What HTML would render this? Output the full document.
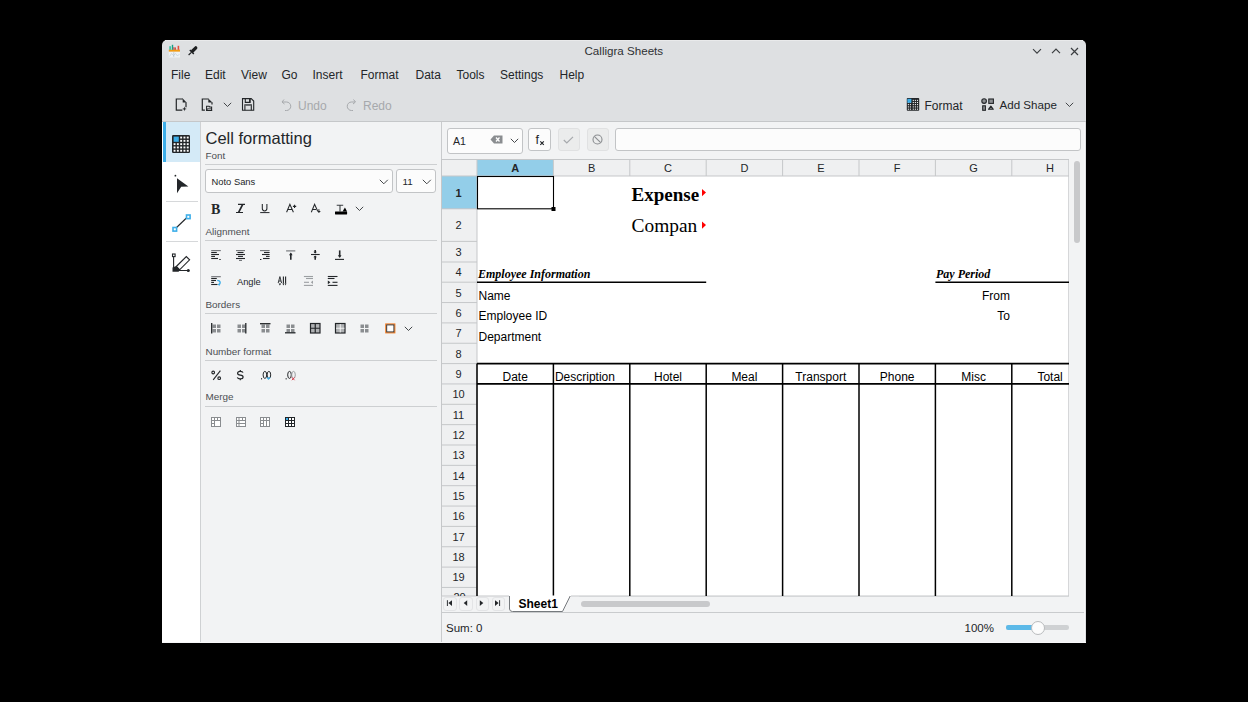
<!DOCTYPE html>
<html><head><meta charset="utf-8">
<style>
*{margin:0;padding:0;box-sizing:border-box}
html,body{width:1248px;height:702px;background:#000;overflow:hidden;font-family:"Liberation Sans",sans-serif;color:#232629}
.a{position:absolute}
.t{position:absolute;white-space:nowrap;line-height:1}
svg{position:absolute;overflow:visible}
</style></head>
<body>

<div class="a" style="left:162px;top:40px;width:924px;height:603px;background:#dee0e2;border-radius:5px 5px 0 0;"></div>
<div class="a" style="left:165px;top:40px;width:918px;height:1px;background:#e9eaeb;"></div>
<svg style="left:0px;top:0px;" width="1" height="1" viewBox="0 0 1 1">
<rect x="168.8" y="51.5" width="11.2" height="6" fill="#eef2f5"/>
<path d="M169.5 56.5 L171.5 53.5 L173.5 55.5 L175.5 53.5 L177.5 56 L179.5 54" stroke="#b8c8d4" stroke-width="0.6" fill="none"/>
<path d="M173.8 52 V57" stroke="#9fb0bd" stroke-width="0.5"/>
<rect x="168.8" y="49.6" width="11.2" height="2" fill="#f39c12"/>
<rect x="169.4" y="46.2" width="1.4" height="3.6" fill="#1abc9c"/>
<rect x="171.8" y="44.8" width="1.4" height="5" fill="#16a085"/>
<rect x="174.4" y="47.4" width="1.4" height="2.4" fill="#c0392b"/>
<rect x="177.6" y="45.8" width="1.6" height="4" fill="#e74c3c"/>
<rect x="173.2" y="47.2" width="1" height="2.6" fill="#d35454"/>
</svg>
<svg style="left:0px;top:0px;" width="1" height="1" viewBox="0 0 1 1">
<path d="M195.8 47.8 L192.6 51" stroke="#1d1f21" stroke-width="3.2" stroke-linecap="round"/>
<path d="M189.8 49.9 L193.8 53.9" stroke="#1d1f21" stroke-width="1.4"/>
<path d="M191.4 52.4 L188.6 55" stroke="#1d1f21" stroke-width="1.1"/>
</svg>
<div class="t" style="left:584.5px;top:44.8px;font-size:11.6px;color:#2e3134;">Calligra Sheets</div>
<svg style="left:1032px;top:48px;" width="10" height="7" viewBox="0 0 10 7"><path d="M1 1.2 L5 5.2 L9 1.2" stroke="#3b3e41" stroke-width="1.1" fill="none"/></svg>
<svg style="left:1051px;top:48px;" width="10" height="7" viewBox="0 0 10 7"><path d="M1 5.2 L5 1.2 L9 5.2" stroke="#3b3e41" stroke-width="1.2" fill="none"/></svg>
<svg style="left:1069.6px;top:47px;" width="9" height="9" viewBox="0 0 9 9"><path d="M1 1 L8 8 M8 1 L1 8" stroke="#3b3e41" stroke-width="1.2" fill="none"/></svg>
<div class="t" style="left:171px;top:69.2px;font-size:12px;color:#232629;">File</div>
<div class="t" style="left:205px;top:69.2px;font-size:12px;color:#232629;">Edit</div>
<div class="t" style="left:241px;top:69.2px;font-size:12px;color:#232629;">View</div>
<div class="t" style="left:281.5px;top:69.2px;font-size:12px;color:#232629;">Go</div>
<div class="t" style="left:312.5px;top:69.2px;font-size:12px;color:#232629;">Insert</div>
<div class="t" style="left:360.5px;top:69.2px;font-size:12px;color:#232629;">Format</div>
<div class="t" style="left:415.5px;top:69.2px;font-size:12px;color:#232629;">Data</div>
<div class="t" style="left:456.5px;top:69.2px;font-size:12px;color:#232629;">Tools</div>
<div class="t" style="left:500px;top:69.2px;font-size:12px;color:#232629;">Settings</div>
<div class="t" style="left:559.5px;top:69.2px;font-size:12px;color:#232629;">Help</div>
<svg style="left:175px;top:97px;" width="14" height="16" viewBox="0 0 14 16">
<path d="M8 2 H1.3 V13.1 H7.3" stroke="#232629" stroke-width="1.2" fill="none"/>
<path d="M11 5.2 V10.2" stroke="#232629" stroke-width="1.2" fill="none"/>
<path d="M7.7 1.4 V5.5 H11.6 Z" fill="#232629"/>
<path d="M9.4 9.6 L9.95 11.35 L11.7 11.9 L9.95 12.45 L9.4 14.2 L8.85 12.45 L7.1 11.9 L8.85 11.35 Z" fill="#232629"/>
</svg>
<svg style="left:201px;top:97px;" width="14" height="16" viewBox="0 0 14 16">
<path d="M7.6 2 H1.3 V13.1 H3.9" stroke="#232629" stroke-width="1.2" fill="none"/>
<path d="M11 5.2 V7.6" stroke="#232629" stroke-width="1.2" fill="none"/>
<path d="M7.3 1.4 V5.5 H11.4 Z" fill="#232629"/>
<path d="M5.6 13.4 V9.3 H8 L8.8 10 H10.6 V13.4 Z" fill="#f4f4f5" stroke="#232629" stroke-width="1.1"/>
<path d="M5.6 13.4 L6.8 11.3 H10.6" stroke="#232629" stroke-width="0.8" fill="none"/>
<path d="M5.1 13.4 H11.1" stroke="#232629" stroke-width="1.1"/>
</svg>
<svg style="left:223px;top:102px;" width="9" height="6" viewBox="0 0 9 6"><path d="M0.8 0.8 L4.5 4.5 L8.2 0.8" stroke="#3b3e41" stroke-width="0.95" fill="none"/></svg>
<svg style="left:241px;top:97px;" width="14" height="16" viewBox="0 0 14 16">
<path d="M1.5 1.6 H10.2 L12.7 4.1 V13.2 H1.5 Z" stroke="#232629" stroke-width="1.1" fill="none"/>
<path d="M4.3 1.6 V5.4 H8.8 V1.6" stroke="#232629" stroke-width="1.1" fill="none"/>
<rect x="8.2" y="1.6" width="1.4" height="4.3" fill="#232629"/>
<path d="M3.9 13.2 V7.9 H10.3 V13.2" stroke="#232629" stroke-width="1.1" fill="none"/>
<path d="M4 8.2 H10.2" stroke="#6b6e71" stroke-width="1.4"/>
</svg>
<svg style="left:281px;top:98px;" width="12" height="14" viewBox="0 0 12 14"><path d="M3 1.5 L1 4 L3.5 6 M1.5 4 H5.5 A4.2 4.2 0 0 1 5.5 12.5 H4" stroke="#a6a9ac" stroke-width="1" fill="none"/></svg>
<div class="t" style="left:298px;top:99.5px;font-size:12px;color:#a6a9ac;">Undo</div>
<svg style="left:345px;top:98px;" width="12" height="14" viewBox="0 0 12 14"><path d="M8.5 1.5 L10.5 4 L8 6 M10 4 H6.5 A4.2 4.2 0 0 0 6.5 12.5 H8" stroke="#a6a9ac" stroke-width="1" fill="none"/></svg>
<div class="t" style="left:363px;top:99.5px;font-size:12px;color:#a6a9ac;">Redo</div>
<svg style="left:0px;top:0px;" width="1" height="1" viewBox="0 0 1 1"><rect x="906.8" y="98" width="12.4" height="12.8" rx="0.8" fill="#232629"/><rect x="907.85" y="99.85000000000001" width="1.1" height="1.1" fill="#f4f4f4"/><rect x="907.85" y="101.95" width="1.1" height="1.1" fill="#f4f4f4"/><rect x="907.85" y="104.05" width="1.1" height="1.1" fill="#f4f4f4"/><rect x="907.85" y="106.35000000000001" width="1.1" height="1.1" fill="#f4f4f4"/><rect x="907.85" y="108.65" width="1.1" height="1.1" fill="#f4f4f4"/><rect x="909.85" y="99.85000000000001" width="1.1" height="1.1" fill="#f4f4f4"/><rect x="909.85" y="101.95" width="1.1" height="1.1" fill="#f4f4f4"/><rect x="909.85" y="104.05" width="1.1" height="1.1" fill="#f4f4f4"/><rect x="909.85" y="106.35000000000001" width="1.1" height="1.1" fill="#f4f4f4"/><rect x="909.85" y="108.65" width="1.1" height="1.1" fill="#f4f4f4"/><rect x="912.75" y="99.85000000000001" width="1.1" height="1.1" fill="#f4f4f4"/><rect x="912.75" y="101.95" width="1.1" height="1.1" fill="#f4f4f4"/><rect x="912.75" y="104.05" width="1.1" height="1.1" fill="#f4f4f4"/><rect x="912.75" y="106.35000000000001" width="1.1" height="1.1" fill="#f4f4f4"/><rect x="912.75" y="108.65" width="1.1" height="1.1" fill="#f4f4f4"/><rect x="914.85" y="99.85000000000001" width="1.1" height="1.1" fill="#f4f4f4"/><rect x="914.85" y="101.95" width="1.1" height="1.1" fill="#f4f4f4"/><rect x="914.85" y="104.05" width="1.1" height="1.1" fill="#f4f4f4"/><rect x="914.85" y="106.35000000000001" width="1.1" height="1.1" fill="#f4f4f4"/><rect x="914.85" y="108.65" width="1.1" height="1.1" fill="#f4f4f4"/><rect x="916.95" y="99.85000000000001" width="1.1" height="1.1" fill="#f4f4f4"/><rect x="916.95" y="101.95" width="1.1" height="1.1" fill="#f4f4f4"/><rect x="916.95" y="104.05" width="1.1" height="1.1" fill="#f4f4f4"/><rect x="916.95" y="106.35000000000001" width="1.1" height="1.1" fill="#f4f4f4"/><rect x="916.95" y="108.65" width="1.1" height="1.1" fill="#f4f4f4"/><rect x="907.4" y="98.8" width="4" height="4" fill="#3daee9"/></svg>
<div class="t" style="left:924.5px;top:99.5px;font-size:12px;color:#232629;">Format</div>
<svg style="left:0px;top:0px;" width="1" height="1" viewBox="0 0 1 1">
<circle cx="984.1" cy="101.1" r="2.3" fill="#8d9093" stroke="#232629" stroke-width="1.1"/>
<rect x="988.8" y="99" width="4.6" height="4.4" fill="#8d9093" stroke="#232629" stroke-width="1.1"/>
<rect x="982.7" y="105.8" width="2.7" height="4.5" fill="#8d9093" stroke="#232629" stroke-width="1.1"/>
<path d="M988.5 109.3 L990.9 106.1 L993.3 109.3 Z" fill="#8d9093" stroke="#232629" stroke-width="1.1" stroke-linejoin="round"/>
</svg>
<div class="t" style="left:999.5px;top:99.2px;font-size:11.6px;color:#232629;">Add Shape</div>
<svg style="left:1065px;top:102px;" width="9" height="6" viewBox="0 0 9 6"><path d="M0.8 0.8 L4.5 4.5 L8.2 0.8" stroke="#3b3e41" stroke-width="0.95" fill="none"/></svg>
<div class="a" style="left:162px;top:121px;width:924px;height:1px;background:#c5c7c9;"></div>
<div class="a" style="left:162px;top:122px;width:38px;height:521px;background:#ffffff;"></div>
<div class="a" style="left:200px;top:122px;width:1px;height:521px;background:#cfd1d3;"></div>
<div class="a" style="left:163px;top:122px;width:37px;height:40px;background:#d4eaf7;"></div>
<div class="a" style="left:163px;top:122px;width:3px;height:40px;background:#3daee9;"></div>
<div class="a" style="left:166px;top:201px;width:32px;height:1px;background:#d6d8da;"></div>
<div class="a" style="left:166px;top:241px;width:32px;height:1px;background:#d6d8da;"></div>
<svg style="left:172px;top:135px;" width="18" height="18" viewBox="0 0 18 18">
<rect x="0" y="0" width="18" height="18" rx="1.2" fill="#232629"/>
<rect x="1.6" y="8.2" width="1.9" height="1.9" fill="#fcfcfc"/><rect x="1.6" y="11.499999999999998" width="1.9" height="1.9" fill="#fcfcfc"/><rect x="1.6" y="14.799999999999999" width="1.9" height="1.9" fill="#fcfcfc"/><rect x="4.9" y="8.2" width="1.9" height="1.9" fill="#fcfcfc"/><rect x="4.9" y="11.499999999999998" width="1.9" height="1.9" fill="#fcfcfc"/><rect x="4.9" y="14.799999999999999" width="1.9" height="1.9" fill="#fcfcfc"/><rect x="8.2" y="1.6" width="1.9" height="1.9" fill="#fcfcfc"/><rect x="8.2" y="4.9" width="1.9" height="1.9" fill="#fcfcfc"/><rect x="8.2" y="8.2" width="1.9" height="1.9" fill="#fcfcfc"/><rect x="8.2" y="11.499999999999998" width="1.9" height="1.9" fill="#fcfcfc"/><rect x="8.2" y="14.799999999999999" width="1.9" height="1.9" fill="#fcfcfc"/><rect x="11.499999999999998" y="1.6" width="1.9" height="1.9" fill="#fcfcfc"/><rect x="11.499999999999998" y="4.9" width="1.9" height="1.9" fill="#fcfcfc"/><rect x="11.499999999999998" y="8.2" width="1.9" height="1.9" fill="#fcfcfc"/><rect x="11.499999999999998" y="11.499999999999998" width="1.9" height="1.9" fill="#fcfcfc"/><rect x="11.499999999999998" y="14.799999999999999" width="1.9" height="1.9" fill="#fcfcfc"/><rect x="14.799999999999999" y="1.6" width="1.9" height="1.9" fill="#fcfcfc"/><rect x="14.799999999999999" y="4.9" width="1.9" height="1.9" fill="#fcfcfc"/><rect x="14.799999999999999" y="8.2" width="1.9" height="1.9" fill="#fcfcfc"/><rect x="14.799999999999999" y="11.499999999999998" width="1.9" height="1.9" fill="#fcfcfc"/><rect x="14.799999999999999" y="14.799999999999999" width="1.9" height="1.9" fill="#fcfcfc"/>
<rect x="1.6" y="1.6" width="5.2" height="5.2" fill="#3daee9"/>
</svg>
<svg style="left:0px;top:0px;" width="1" height="1" viewBox="0 0 1 1">
<circle cx="175.4" cy="175.7" r="0.9" fill="#232629"/>
<path d="M177 178.3 L188.4 186.4 L181.2 186.7 L177 193.2 Z" fill="#232629"/>
</svg>
<svg style="left:0px;top:0px;" width="1" height="1" viewBox="0 0 1 1">
<path d="M175 229 L188 216.5" stroke="#232629" stroke-width="1.1"/>
<rect x="173" y="227.5" width="3.6" height="3.6" fill="#fff" stroke="#3daee9" stroke-width="1.6"/>
<rect x="186.5" y="215" width="3.6" height="3.6" fill="#fff" stroke="#3daee9" stroke-width="1.6"/>
</svg>
<svg style="left:0px;top:0px;" width="1" height="1" viewBox="0 0 1 1">
<path d="M173.6 256.5 V270.5 H187" stroke="#232629" stroke-width="1.1" fill="none"/>
<rect x="172.5" y="254" width="2.6" height="2.6" fill="#fff" stroke="#232629" stroke-width="1.1"/>
<circle cx="188.3" cy="270.6" r="1.5" fill="#232629"/>
<path d="M176.3 266.5 L186.3 256.5 L189.6 259.8 L179.6 269.8 Z" fill="#fcfcfc" stroke="#232629" stroke-width="1.1"/>
<path d="M172.5 271.8 L172.5 267.5 L176.3 266 L180.2 269.7 L178.6 271.8 Z" fill="#232629"/>
</svg>
<div class="a" style="left:201px;top:122px;width:240px;height:521px;background:#f2f3f4;"></div>
<div class="a" style="left:441px;top:122px;width:1px;height:521px;background:#c9cbcd;"></div>
<div class="t" style="left:205.5px;top:130px;font-size:16.5px;color:#232629;">Cell formatting</div>
<div class="t" style="left:205.5px;top:150.5px;font-size:9.9px;color:#4b4e52;">Font</div>
<div class="a" style="left:205px;top:164px;width:232px;height:1px;background:#cdcfd1;"></div>
<div class="a" style="left:205px;top:169px;width:188px;height:24px;background:#fcfcfc;border:1px solid #c2c4c6;border-radius:3px;"></div>
<div class="t" style="left:211.5px;top:177px;font-size:9.4px;color:#232629;">Noto Sans</div>
<svg style="left:379px;top:179px;" width="10" height="6" viewBox="0 0 10 6"><path d="M0.8 0.8 L4.8 4.8 L8.8 0.8" stroke="#3b3e41" stroke-width="0.95" fill="none"/></svg>
<div class="a" style="left:396px;top:169px;width:40px;height:24px;background:#fcfcfc;border:1px solid #c2c4c6;border-radius:3px;"></div>
<div class="t" style="left:402.5px;top:177px;font-size:9.8px;color:#232629;">11</div>
<svg style="left:422px;top:179px;" width="10" height="6" viewBox="0 0 10 6"><path d="M0.8 0.8 L4.8 4.8 L8.8 0.8" stroke="#3b3e41" stroke-width="0.95" fill="none"/></svg>
<div class="t" style="left:211px;top:202.8px;font-size:14px;font-family:'Liberation Serif',serif;font-weight:bold;color:#232629">B</div>
<svg style="left:0px;top:0px;" width="1" height="1" viewBox="0 0 1 1"><path d="M238 204.4 H245 M236 212.5 H243" stroke="#232629" stroke-width="1.1"/><path d="M242.6 204.6 L238.6 212.3" stroke="#232629" stroke-width="1.7"/></svg>
<svg style="left:0px;top:0px;" width="1" height="1" viewBox="0 0 1 1"><path d="M262.3 203.9 V208.6 A2.3 2.3 0 0 0 266.9 208.6 V203.9" stroke="#232629" stroke-width="1.05" fill="none"/><path d="M260.2 212.6 H269.5" stroke="#232629" stroke-width="1"/></svg>
<svg style="left:0px;top:0px;" width="1" height="1" viewBox="0 0 1 1"><path d="M286.6 212.3 L289.9 204.3 L293.4 212.3 M287.9 209.4 H292" stroke="#232629" stroke-width="1.05" fill="none"/><path d="M294.55 204.7 V208 M292.9 206.35 H296.2" stroke="#232629" stroke-width="1.1"/></svg>
<svg style="left:0px;top:0px;" width="1" height="1" viewBox="0 0 1 1"><path d="M311.3 212.3 L314.6 204.3 L317.6 211 M312.5 209.4 H316" stroke="#232629" stroke-width="1.05" fill="none"/><path d="M318.9 209.2 V212" stroke="#232629" stroke-width="1"/><path d="M317.1 210.9 L318.9 213 L320.8 210.9 Z" fill="#232629"/></svg>
<svg style="left:0px;top:0px;" width="1" height="1" viewBox="0 0 1 1"><path d="M336.7 205.3 H343.2 M340 205.3 V211.5" stroke="#3b3e41" stroke-width="1.1" fill="none"/><rect x="335" y="211.4" width="12.1" height="3.1" rx="0.4" fill="#000"/><path d="M342.6 211.6 L344.9 207.6 L347.1 211.6 Z" fill="#000"/></svg>
<svg style="left:355px;top:206px;" width="9" height="6" viewBox="0 0 9 6"><path d="M0.8 0.8 L4.5 4.5 L8.2 0.8" stroke="#3b3e41" stroke-width="0.95" fill="none"/></svg>
<div class="t" style="left:205.5px;top:226.5px;font-size:9.9px;color:#4b4e52;">Alignment</div>
<div class="a" style="left:205px;top:240px;width:232px;height:1px;background:#cdcfd1;"></div>
<svg style="left:0px;top:0px;" width="1" height="1" viewBox="0 0 1 1"><path d="M211.2 250.6 H220.8" stroke="#6d7074" stroke-width="1.1"/><path d="M211.2 252.5 H216.8" stroke="#232629" stroke-width="1.1"/><path d="M211.2 254.5 H219" stroke="#232629" stroke-width="1.1"/><path d="M211.2 256.4 H215" stroke="#232629" stroke-width="1.1"/><path d="M211.2 258.5 H218" stroke="#232629" stroke-width="1.1"/><path d="M219.3 259.5 H220.7" stroke="#232629" stroke-width="1.1"/></svg>
<svg style="left:0px;top:0px;" width="1" height="1" viewBox="0 0 1 1"><path d="M236 250.6 H245" stroke="#6d7074" stroke-width="1.1"/><path d="M237.5 252.5 H243.5" stroke="#232629" stroke-width="1.1"/><path d="M236 254.5 H245" stroke="#232629" stroke-width="1.1"/><path d="M238 256.4 H243" stroke="#232629" stroke-width="1.1"/><path d="M236 258.5 H245" stroke="#232629" stroke-width="1.1"/><path d="M239 260.4 H242" stroke="#6d7074" stroke-width="1.1"/></svg>
<svg style="left:0px;top:0px;" width="1" height="1" viewBox="0 0 1 1"><path d="M260 250.6 H269.6" stroke="#6d7074" stroke-width="1.1"/><path d="M264 252.5 H269.6" stroke="#232629" stroke-width="1.1"/><path d="M262 254.5 H269.6" stroke="#232629" stroke-width="1.1"/><path d="M266 256.4 H269.6" stroke="#232629" stroke-width="1.1"/><path d="M263 258.5 H269.6" stroke="#232629" stroke-width="1.1"/><path d="M260 259.5 H261.4" stroke="#232629" stroke-width="1.1"/></svg>
<svg style="left:0px;top:0px;" width="1" height="1" viewBox="0 0 1 1"><path d="M286.1 250.9 H295.3" stroke="#6d7074" stroke-width="1.1"/><path d="M290.8 253.5 V259.8" stroke="#232629" stroke-width="1.6"/><path d="M289 255.2 L290.8 252.5 L292.6 255.2 Z" fill="#232629"/></svg>
<svg style="left:0px;top:0px;" width="1" height="1" viewBox="0 0 1 1"><path d="M311 254.5 H319.7" stroke="#232629" stroke-width="1.1"/><path d="M315.2 250 V252.8 M315.2 256.2 V259.8" stroke="#232629" stroke-width="1.6"/><path d="M313.4 251.8 L315.2 253.6 L317 251.8 Z M313.4 257.2 L315.2 255.4 L317 257.2 Z" fill="#232629"/></svg>
<svg style="left:0px;top:0px;" width="1" height="1" viewBox="0 0 1 1"><path d="M335 259.4 H344" stroke="#232629" stroke-width="1.1"/><path d="M339.7 250.4 V256.5" stroke="#232629" stroke-width="1.6"/><path d="M337.9 255.2 L339.7 258 L341.5 255.2 Z" fill="#232629"/></svg>
<svg style="left:0px;top:0px;" width="1" height="1" viewBox="0 0 1 1"><path d="M211.2 276.7 H220.8" stroke="#6d7074" stroke-width="1.1"/><path d="M211.2 278.5 H216.8" stroke="#232629" stroke-width="1.1"/><path d="M211.2 280.5 H216" stroke="#232629" stroke-width="1.1"/><path d="M211.2 282.4 H214" stroke="#232629" stroke-width="1.1"/><path d="M211.2 284.5 H217.5" stroke="#232629" stroke-width="1.1"/><path d="M217.2 280.4 Q220.2 280.4 220.2 282.8 Q220.2 284.2 218.8 284.6" stroke="#3daee9" stroke-width="1.3" fill="none"/><path d="M219.6 283 L217.8 284.6 L219.6 286 Z" fill="#3daee9"/></svg>
<div class="t" style="left:237px;top:277.5px;font-size:9.3px;color:#232629;">Angle</div>
<svg style="left:0px;top:0px;" width="1" height="1" viewBox="0 0 1 1"><path d="M278.2 283 L279.9 276.6 L281.6 283 M278.8 281 H281" stroke="#232629" stroke-width="0.9" fill="none"/><path d="M283.4 276.5 V283.6 M285.6 276.5 V283.6" stroke="#232629" stroke-width="1.1"/><path d="M278.6 283.6 L279.9 285.6 L281.2 283.6 Z M282.4 283.6 L283.4 285.6 L284.4 283.6 Z M284.8 283.6 L285.6 285.6 L286.4 283.6 Z" fill="#232629"/></svg>
<svg style="left:0px;top:0px;" width="1" height="1" viewBox="0 0 1 1"><path d="M303.9 276.5 H313" stroke="#9c9fa2" stroke-width="1.1"/><path d="M306 278.5 H313" stroke="#9c9fa2" stroke-width="1.1"/><path d="M304 282.3 H309" stroke="#9c9fa2" stroke-width="1.1"/><path d="M303.9 285.4 H313" stroke="#9c9fa2" stroke-width="1.1"/><path d="M313 280.5 L310.8 282.3 L313 284 Z" fill="#9c9fa2"/></svg>
<svg style="left:0px;top:0px;" width="1" height="1" viewBox="0 0 1 1"><path d="M327.8 276.5 H337.5" stroke="#232629" stroke-width="1.1"/><path d="M327.8 278.5 H334.5" stroke="#232629" stroke-width="1.1"/><path d="M332.5 282.3 H337.5" stroke="#232629" stroke-width="1.1"/><path d="M327.8 285.4 H337.5" stroke="#232629" stroke-width="1.1"/><path d="M327.8 280.4 L330.4 282.3 L327.8 284.2 Z" fill="#232629"/></svg>
<div class="t" style="left:205.5px;top:299.5px;font-size:9.9px;color:#4b4e52;">Borders</div>
<div class="a" style="left:205px;top:313px;width:232px;height:1px;background:#cdcfd1;"></div>
<svg style="left:211px;top:323px;" width="11" height="11" viewBox="0 0 11 11"><rect x="1.5" y="1.5" width="3.5" height="3.5" fill="#8a8d90"/><rect x="1.5" y="6.0" width="3.5" height="3.5" fill="#8a8d90"/><rect x="6.0" y="1.5" width="3.5" height="3.5" fill="#8a8d90"/><rect x="6.0" y="6.0" width="3.5" height="3.5" fill="#8a8d90"/><path d="M0.7 0 V10.5" stroke="#232629" stroke-width="1.3"/></svg>
<svg style="left:236px;top:323px;" width="11" height="11" viewBox="0 0 11 11"><rect x="1.5" y="1.5" width="3.5" height="3.5" fill="#8a8d90"/><rect x="1.5" y="6.0" width="3.5" height="3.5" fill="#8a8d90"/><rect x="6.0" y="1.5" width="3.5" height="3.5" fill="#8a8d90"/><rect x="6.0" y="6.0" width="3.5" height="3.5" fill="#8a8d90"/><path d="M9.8 0 V10.5" stroke="#232629" stroke-width="1.3"/></svg>
<svg style="left:260px;top:323px;" width="11" height="11" viewBox="0 0 11 11"><rect x="1.5" y="1.5" width="3.5" height="3.5" fill="#8a8d90"/><rect x="1.5" y="6.0" width="3.5" height="3.5" fill="#8a8d90"/><rect x="6.0" y="1.5" width="3.5" height="3.5" fill="#8a8d90"/><rect x="6.0" y="6.0" width="3.5" height="3.5" fill="#8a8d90"/><path d="M0 0.7 H10.5" stroke="#232629" stroke-width="1.3"/></svg>
<svg style="left:285px;top:323px;" width="11" height="11" viewBox="0 0 11 11"><rect x="1.5" y="1.5" width="3.5" height="3.5" fill="#8a8d90"/><rect x="1.5" y="6.0" width="3.5" height="3.5" fill="#8a8d90"/><rect x="6.0" y="1.5" width="3.5" height="3.5" fill="#8a8d90"/><rect x="6.0" y="6.0" width="3.5" height="3.5" fill="#8a8d90"/><path d="M0 9.8 H10.5" stroke="#232629" stroke-width="1.3"/></svg>
<svg style="left:310px;top:323px;" width="11" height="11" viewBox="0 0 11 11"><rect x="0.5" y="0.5" width="9.5" height="9.5" fill="#b0b2b4" stroke="#232629" stroke-width="1.2"/><path d="M5.25 0.5 V10 M0.5 5.25 H10" stroke="#232629" stroke-width="1.2"/></svg>
<svg style="left:334.5px;top:323px;" width="11" height="11" viewBox="0 0 11 11"><rect x="0.5" y="0.5" width="9.5" height="9.5" fill="#b0b2b4" stroke="#232629" stroke-width="1.2"/><path d="M5.25 1 V9.5 M1 5.25 H9.5" stroke="#fff" stroke-width="0.8"/></svg>
<svg style="left:358.8px;top:323px;" width="11" height="11" viewBox="0 0 11 11"><rect x="1.5" y="1.5" width="3.5" height="3.5" fill="#8a8d90"/><rect x="1.5" y="6.0" width="3.5" height="3.5" fill="#8a8d90"/><rect x="6.0" y="1.5" width="3.5" height="3.5" fill="#8a8d90"/><rect x="6.0" y="6.0" width="3.5" height="3.5" fill="#8a8d90"/></svg>
<svg style="left:385px;top:323px;" width="11" height="11" viewBox="0 0 11 11"><rect x="0.8" y="1" width="9" height="8.8" fill="#fcfcfc" stroke="#f47b20" stroke-width="1.2"/><rect x="1.7" y="1.9" width="7.2" height="7" fill="none" stroke="#2a2a2a" stroke-width="0.9"/></svg>
<svg style="left:404px;top:326px;" width="9" height="6" viewBox="0 0 9 6"><path d="M0.8 0.8 L4.5 4.5 L8.2 0.8" stroke="#3b3e41" stroke-width="0.95" fill="none"/></svg>
<div class="t" style="left:205.5px;top:346.5px;font-size:9.9px;color:#4b4e52;">Number format</div>
<div class="a" style="left:205px;top:360px;width:232px;height:1px;background:#cdcfd1;"></div>
<svg style="left:0px;top:0px;" width="1" height="1" viewBox="0 0 1 1"><circle cx="213.2" cy="372.5" r="1.35" fill="none" stroke="#232629" stroke-width="1.1"/><circle cx="219.2" cy="378.2" r="1.35" fill="none" stroke="#232629" stroke-width="1.1"/><path d="M220.4 370.6 L213.2 379.8" stroke="#232629" stroke-width="1.1"/></svg>
<svg style="left:0px;top:0px;" width="1" height="1" viewBox="0 0 1 1"><path d="M243 372.6 Q242.6 371.3 240.3 371.3 Q237.6 371.3 237.6 373.2 Q237.6 374.8 240.3 375.1 Q243.1 375.4 243.1 377 Q243.1 378.9 240.3 378.9 Q237.8 378.9 237.3 377.4" stroke="#232629" stroke-width="1.2" fill="none"/><path d="M240.3 370 V371.3 M240.3 378.9 V380.2" stroke="#232629" stroke-width="1.1"/></svg>
<svg style="left:0px;top:0px;" width="1" height="1" viewBox="0 0 1 1"><rect x="261" y="378.2" width="1.1" height="1.2" fill="#232629"/><ellipse cx="264.9" cy="374.9" rx="1.8" ry="3.5" fill="none" stroke="#232629" stroke-width="1"/><ellipse cx="268.9" cy="374.9" rx="1.8" ry="3.5" fill="none" stroke="#232629" stroke-width="1"/><path d="M266.2 377.4 H270.8 L268.5 380 Z" fill="#3daee9"/></svg>
<svg style="left:0px;top:0px;" width="1" height="1" viewBox="0 0 1 1"><rect x="285.6" y="378.2" width="1.1" height="1.2" fill="#232629"/><ellipse cx="289.5" cy="374.9" rx="1.8" ry="3.5" fill="none" stroke="#232629" stroke-width="1"/><ellipse cx="293.5" cy="374.9" rx="1.8" ry="3.5" fill="none" stroke="#9a9da0" stroke-width="1"/><path d="M291.9 377.4 L294.5 380.2 M294.5 377.4 L291.9 380.2" stroke="#da4453" stroke-width="1"/></svg>
<div class="t" style="left:205.5px;top:392px;font-size:9.9px;color:#4b4e52;">Merge</div>
<div class="a" style="left:205px;top:406px;width:232px;height:1px;background:#cdcfd1;"></div>
<svg style="left:211px;top:417px;" width="10" height="10" viewBox="0 0 10 10"><rect x="0.5" y="0.5" width="9" height="9" fill="#fff" stroke="#8a8d90" stroke-width="1"/><path d="M0.5 3.5 H9.5 M3.5 0.5 V9.5 M0.5 6.5 H3.5 M6.5 0.5 V3.5" stroke="#8a8d90" stroke-width="1"/></svg>
<svg style="left:236px;top:417px;" width="10" height="10" viewBox="0 0 10 10"><rect x="0.5" y="0.5" width="9" height="9" fill="#fff" stroke="#8a8d90" stroke-width="1"/><path d="M0.5 3.5 H9.5 M0.5 6.5 H9.5 M3 0.5 V9.5 M6.5 0.5 V3.5" stroke="#8a8d90" stroke-width="1"/></svg>
<svg style="left:260px;top:417px;" width="10" height="10" viewBox="0 0 10 10"><rect x="0.5" y="0.5" width="9" height="9" fill="#fff" stroke="#8a8d90" stroke-width="1"/><path d="M0.5 3.5 H9.5 M3.5 0.5 V9.5 M6.5 0.5 V9.5 M0.5 6.5 H3.5" stroke="#8a8d90" stroke-width="1"/></svg>
<svg style="left:285px;top:417px;" width="10" height="10" viewBox="0 0 10 10"><rect x="0" y="0" width="10" height="10" fill="#232629"/><rect x="1" y="1" width="2" height="2" fill="#fff"/><rect x="1" y="4" width="2" height="2" fill="#fff"/><rect x="1" y="7" width="2" height="2" fill="#fff"/><rect x="4" y="1" width="2" height="2" fill="#fff"/><rect x="4" y="4" width="2" height="2" fill="#fff"/><rect x="4" y="7" width="2" height="2" fill="#fff"/><rect x="7" y="1" width="2" height="2" fill="#fff"/><rect x="7" y="4" width="2" height="2" fill="#fff"/><rect x="7" y="7" width="2" height="2" fill="#fff"/><rect x="1" y="1" width="2" height="2" fill="#3daee9"/></svg>
<div class="a" style="left:442px;top:122px;width:643px;height:521px;background:#f2f3f4;"></div>
<div class="a" style="left:447px;top:127.5px;width:76px;height:26px;background:#fcfcfc;border:1px solid #c2c4c6;border-radius:3px;"></div>
<div class="t" style="left:453px;top:136px;font-size:10.6px;color:#232629;">A1</div>
<svg style="left:489.5px;top:135.2px;" width="13" height="9" viewBox="0 0 13 9"><path d="M0.5 4.5 L4 0.5 H12.5 V8.5 H4 Z" fill="#8a8d90"/><path d="M6 2.5 L9.5 6.5 M9.5 2.5 L6 6.5" stroke="#fcfcfc" stroke-width="1.3"/></svg>
<svg style="left:509.5px;top:137.8px;" width="10" height="6" viewBox="0 0 10 6"><path d="M0.8 0.8 L4.5 4.5 L8.2 0.8" stroke="#3b3e41" stroke-width="0.95" fill="none"/></svg>
<div class="a" style="left:528.2px;top:128.3px;width:22.4px;height:23px;background:#fcfcfc;border:1px solid #c2c4c6;border-radius:3px;"></div>
<div class="t" style="left:535.6px;top:134.2px;font-size:12.5px;color:#232629">f</div>
<svg style="left:540.2px;top:140.6px;" width="4" height="4" viewBox="0 0 4 4"><path d="M0.3 0.3 L3.8 3.8 M3.8 0.3 L0.3 3.8" stroke="#232629" stroke-width="1.15"/></svg>
<div class="a" style="left:557.5px;top:128.2px;width:22px;height:22.6px;background:#ebecec;border:1px solid #e0e1e2;border-radius:3px;"></div>
<svg style="left:563px;top:136px;" width="11" height="8" viewBox="0 0 11 8"><path d="M0.8 4 L3.8 7 L10 0.8" stroke="#a6a9ac" stroke-width="1.2" fill="none"/></svg>
<div class="a" style="left:586.5px;top:128.2px;width:22px;height:22.6px;background:#ebecec;border:1px solid #e0e1e2;border-radius:3px;"></div>
<svg style="left:592.1px;top:134px;" width="11" height="11" viewBox="0 0 11 11"><circle cx="5.5" cy="5.5" r="4.5" stroke="#8a8d90" stroke-width="1.1" fill="none"/><path d="M2.3 2.3 L8.7 8.7" stroke="#8a8d90" stroke-width="1.1"/></svg>
<div class="a" style="left:614.5px;top:128px;width:466px;height:23px;background:#fcfcfc;border:1px solid #c2c4c6;border-radius:3px;"></div>
<div class="a" style="left:442px;top:159px;width:627px;height:437px;background:#fff;"></div>
<div class="a" style="left:442px;top:159px;width:627px;height:17px;background:#eff0f1;"></div>
<div class="a" style="left:442px;top:159px;width:35px;height:437px;background:#eff0f1;"></div>
<div class="a" style="left:477px;top:159px;width:76.4px;height:17px;background:#93cee9;"></div>
<div class="a" style="left:442px;top:176px;width:35px;height:32.8px;background:#93cee9;"></div>
<svg style="left:0;top:0" width="1248" height="702" viewBox="0 0 1248 702">
<path d="M442 159.5 H1069" stroke="#c5c7c9" stroke-width="1"/><path d="M442 176 H1069" stroke="#c5c7c9" stroke-width="1"/><path d="M441.5 159 V596" stroke="#c5c7c9" stroke-width="1"/><path d="M477 159 V596" stroke="#c5c7c9" stroke-width="1"/><path d="M553.4 159 V176" stroke="#c5c7c9" stroke-width="1"/><path d="M629.8 159 V176" stroke="#c5c7c9" stroke-width="1"/><path d="M706.2 159 V176" stroke="#c5c7c9" stroke-width="1"/><path d="M782.6 159 V176" stroke="#c5c7c9" stroke-width="1"/><path d="M859.0 159 V176" stroke="#c5c7c9" stroke-width="1"/><path d="M935.4000000000001 159 V176" stroke="#c5c7c9" stroke-width="1"/><path d="M1011.8000000000001 159 V176" stroke="#c5c7c9" stroke-width="1"/><path d="M1068.8 159 V596" stroke="#c5c7c9" stroke-width="1"/><path d="M442 208.8 H477" stroke="#c5c7c9" stroke-width="1"/><path d="M442 241.4 H477" stroke="#c5c7c9" stroke-width="1"/><path d="M442 262 H477" stroke="#c5c7c9" stroke-width="1"/><path d="M442 282.2 H477" stroke="#c5c7c9" stroke-width="1"/><path d="M442 302.55 H477" stroke="#c5c7c9" stroke-width="1"/><path d="M442 322.9 H477" stroke="#c5c7c9" stroke-width="1"/><path d="M442 343.25 H477" stroke="#c5c7c9" stroke-width="1"/><path d="M442 363.6 H477" stroke="#c5c7c9" stroke-width="1"/><path d="M442 383.95 H477" stroke="#c5c7c9" stroke-width="1"/><path d="M442 404.3 H477" stroke="#c5c7c9" stroke-width="1"/><path d="M442 424.65 H477" stroke="#c5c7c9" stroke-width="1"/><path d="M442 445.0 H477" stroke="#c5c7c9" stroke-width="1"/><path d="M442 465.35 H477" stroke="#c5c7c9" stroke-width="1"/><path d="M442 485.7 H477" stroke="#c5c7c9" stroke-width="1"/><path d="M442 506.05 H477" stroke="#c5c7c9" stroke-width="1"/><path d="M442 526.4 H477" stroke="#c5c7c9" stroke-width="1"/><path d="M442 546.75 H477" stroke="#c5c7c9" stroke-width="1"/><path d="M442 567.1 H477" stroke="#c5c7c9" stroke-width="1"/><path d="M442 587.45 H477" stroke="#c5c7c9" stroke-width="1"/><path d="M442 596 H509 M571 596 H1069" stroke="#c5c7c9" stroke-width="1"/><path d="M477 282.2 H706.2" stroke="#000" stroke-width="1.6"/><path d="M935.4000000000001 282.2 H1069" stroke="#000" stroke-width="1.6"/><path d="M477 363.6 H1069" stroke="#000" stroke-width="1.8"/><path d="M477 383.95 H1069" stroke="#000" stroke-width="1.8"/><path d="M477.0 363.6 V596" stroke="#000" stroke-width="1.5"/><path d="M553.4 363.6 V596" stroke="#000" stroke-width="1.5"/><path d="M629.8 363.6 V596" stroke="#000" stroke-width="1.5"/><path d="M706.2 363.6 V596" stroke="#000" stroke-width="1.5"/><path d="M782.6 363.6 V596" stroke="#000" stroke-width="1.5"/><path d="M859.0 363.6 V596" stroke="#000" stroke-width="1.5"/><path d="M935.4000000000001 363.6 V596" stroke="#000" stroke-width="1.5"/><path d="M1011.8000000000001 363.6 V596" stroke="#000" stroke-width="1.5"/><rect x="477.5" y="176.5" width="76" height="32.3" fill="none" stroke="#000" stroke-width="1.1"/><rect x="551.5" y="207" width="4" height="4" fill="#000"/><path d="M702 189 L706 192.6 L702 196.2 Z" fill="#ff0000"/><path d="M702 221.5 L706 225.1 L702 228.7 Z" fill="#ff0000"/></svg>
<div class="t" style="left:495.20000000000005px;width:40px;text-align:center;top:162.5px;font-size:11px;color:#232629;font-weight:bold;">A</div>
<div class="t" style="left:571.6px;width:40px;text-align:center;top:162.5px;font-size:11px;color:#232629;">B</div>
<div class="t" style="left:648.0px;width:40px;text-align:center;top:162.5px;font-size:11px;color:#232629;">C</div>
<div class="t" style="left:724.4000000000001px;width:40px;text-align:center;top:162.5px;font-size:11px;color:#232629;">D</div>
<div class="t" style="left:800.8000000000001px;width:40px;text-align:center;top:162.5px;font-size:11px;color:#232629;">E</div>
<div class="t" style="left:877.2px;width:40px;text-align:center;top:162.5px;font-size:11px;color:#232629;">F</div>
<div class="t" style="left:953.6000000000001px;width:40px;text-align:center;top:162.5px;font-size:11px;color:#232629;">G</div>
<div class="t" style="left:1030.0px;width:40px;text-align:center;top:162.5px;font-size:11px;color:#232629;">H</div>
<div class="t" style="left:441px;width:35px;text-align:center;top:187.6px;font-size:11px;color:#232629;font-weight:bold;">1</div>
<div class="t" style="left:441px;width:35px;text-align:center;top:220.3px;font-size:11px;color:#232629;">2</div>
<div class="t" style="left:441px;width:35px;text-align:center;top:246.89999999999998px;font-size:11px;color:#232629;">3</div>
<div class="t" style="left:441px;width:35px;text-align:center;top:267.3px;font-size:11px;color:#232629;">4</div>
<div class="t" style="left:441px;width:35px;text-align:center;top:287.575px;font-size:11px;color:#232629;">5</div>
<div class="t" style="left:441px;width:35px;text-align:center;top:307.925px;font-size:11px;color:#232629;">6</div>
<div class="t" style="left:441px;width:35px;text-align:center;top:328.275px;font-size:11px;color:#232629;">7</div>
<div class="t" style="left:441px;width:35px;text-align:center;top:348.625px;font-size:11px;color:#232629;">8</div>
<div class="t" style="left:441px;width:35px;text-align:center;top:368.97499999999997px;font-size:11px;color:#232629;">9</div>
<div class="t" style="left:441px;width:35px;text-align:center;top:389.325px;font-size:11px;color:#232629;">10</div>
<div class="t" style="left:441px;width:35px;text-align:center;top:409.675px;font-size:11px;color:#232629;">11</div>
<div class="t" style="left:441px;width:35px;text-align:center;top:430.025px;font-size:11px;color:#232629;">12</div>
<div class="t" style="left:441px;width:35px;text-align:center;top:450.375px;font-size:11px;color:#232629;">13</div>
<div class="t" style="left:441px;width:35px;text-align:center;top:470.72499999999997px;font-size:11px;color:#232629;">14</div>
<div class="t" style="left:441px;width:35px;text-align:center;top:491.075px;font-size:11px;color:#232629;">15</div>
<div class="t" style="left:441px;width:35px;text-align:center;top:511.425px;font-size:11px;color:#232629;">16</div>
<div class="t" style="left:441px;width:35px;text-align:center;top:531.7750000000001px;font-size:11px;color:#232629;">17</div>
<div class="t" style="left:441px;width:35px;text-align:center;top:552.125px;font-size:11px;color:#232629;">18</div>
<div class="t" style="left:441px;width:35px;text-align:center;top:572.4750000000001px;font-size:11px;color:#232629;">19</div>
<div class="a" style="left:442px;top:587.45px;width:35px;height:8.549999999999955px;overflow:hidden"><div class="t" style="left:0;width:35px;text-align:center;top:4.675000000000001px;font-size:11px;color:#232629">20</div></div>
<div class="a" style="left:630px;top:176px;width:72px;height:66px;overflow:hidden"><div class="t" style="left:1.5px;top:9px;font-size:19px;font-weight:bold;font-family:'Liberation Serif',serif;color:#000">Expense Report</div><div class="t" style="left:1.5px;top:39.6px;font-size:19.4px;font-family:'Liberation Serif',serif;color:#000">Compan</div></div>
<div class="t" style="left:478px;top:268px;font-size:12px;font-weight:bold;font-style:italic;font-family:'Liberation Serif',serif;color:#000">Employee Information</div>
<div class="t" style="left:936px;top:268px;font-size:12px;font-weight:bold;font-style:italic;font-family:'Liberation Serif',serif;color:#000">Pay Period</div>
<div class="t" style="left:478.5px;top:289.5px;font-size:12px;color:#000;">Name</div>
<div class="t" style="left:478.5px;top:309.5px;font-size:12px;color:#000;">Employee ID</div>
<div class="t" style="left:478.5px;top:330.5px;font-size:12px;color:#000;">Department</div>
<div class="t" style="left:900px;width:110px;text-align:right;top:289.5px;font-size:12px;color:#000">From</div>
<div class="t" style="left:900px;width:110px;text-align:right;top:310px;font-size:12px;color:#000">To</div>
<div class="t" style="left:477.0px;width:76.4px;text-align:center;top:371px;font-size:12px;color:#000">Date</div>
<div class="t" style="left:554.9px;top:371px;font-size:12px;color:#000">Description</div>
<div class="t" style="left:629.8px;width:76.4px;text-align:center;top:371px;font-size:12px;color:#000">Hotel</div>
<div class="t" style="left:706.2px;width:76.4px;text-align:center;top:371px;font-size:12px;color:#000">Meal</div>
<div class="t" style="left:782.6px;width:76.4px;text-align:center;top:371px;font-size:12px;color:#000">Transport</div>
<div class="t" style="left:859.0px;width:76.4px;text-align:center;top:371px;font-size:12px;color:#000">Phone</div>
<div class="t" style="left:935.4000000000001px;width:76.4px;text-align:center;top:371px;font-size:12px;color:#000">Misc</div>
<div class="t" style="left:1011.8000000000001px;width:50.999999999999886px;text-align:right;top:371px;font-size:12px;color:#000">Total</div>
<div class="a" style="left:1069px;top:159px;width:16px;height:437px;background:#f2f3f4;"></div>
<div class="a" style="left:1074px;top:161px;width:6px;height:82px;background:#c8c9cb;border-radius:3px;"></div>
<div class="a" style="left:443.3px;top:597px;width:13.3px;height:13.6px;background:#f2f3f4;border:1px solid #e3e4e6;border-radius:3px;"></div>
<div class="a" style="left:459.4px;top:597px;width:13.3px;height:13.6px;background:#f2f3f4;border:1px solid #e3e4e6;border-radius:3px;"></div>
<div class="a" style="left:475.5px;top:597px;width:13.3px;height:13.6px;background:#f2f3f4;border:1px solid #e3e4e6;border-radius:3px;"></div>
<div class="a" style="left:491.6px;top:597px;width:13.3px;height:13.6px;background:#f2f3f4;border:1px solid #e3e4e6;border-radius:3px;"></div>
<svg style="left:0px;top:0px;" width="1" height="1" viewBox="0 0 1 1"><path d="M447.4 600.2 V606" stroke="#232629" stroke-width="0.95"/><path d="M452 600.2 L448.4 603.1 L452 606 Z" fill="#232629"/></svg>
<svg style="left:0px;top:0px;" width="1" height="1" viewBox="0 0 1 1"><path d="M467.2 600.3 L463.7 603.1 L467.2 605.9 Z" fill="#232629"/></svg>
<svg style="left:0px;top:0px;" width="1" height="1" viewBox="0 0 1 1"><path d="M479.8 600.3 L483.3 603.1 L479.8 605.9 Z" fill="#232629"/></svg>
<svg style="left:0px;top:0px;" width="1" height="1" viewBox="0 0 1 1"><path d="M499.6 600.2 V606" stroke="#232629" stroke-width="0.95"/><path d="M495 600.2 L498.6 603.1 L495 606 Z" fill="#232629"/></svg>
<svg style="left:0;top:0" width="1248" height="702" viewBox="0 0 1248 702"><path d="M509.5 595.5 L509.5 609 Q509.8 611.5 512.5 611.5 L562.5 611.5 L570.2 595.5 Z" fill="#ffffff" stroke="none"/><path d="M509.5 596 L509.5 609 Q509.8 611.5 512.5 611.5 L562.5 611.5 L570.2 596" fill="none" stroke="#75797d" stroke-width="1"/><path d="M579 596.5 H1069" stroke="#d5d7d9" stroke-width="1"/></svg>
<div class="t" style="left:518.5px;top:597.5px;font-size:12px;color:#000;font-weight:bold;">Sheet1</div>
<div class="a" style="left:581px;top:601px;width:129px;height:6px;background:#c8c9cb;border-radius:3px;"></div>
<div class="a" style="left:442px;top:612px;width:643px;height:1px;background:#c9cbcd;"></div>
<div class="t" style="left:446px;top:623px;font-size:11.5px;color:#232629;">Sum: 0</div>
<div class="t" style="left:964.5px;top:623px;font-size:11.5px;color:#232629;">100%</div>
<div class="a" style="left:1005.5px;top:625px;width:63.5px;height:4.5px;background:#cfd1d3;border-radius:2.25px;"></div>
<div class="a" style="left:1005.5px;top:625px;width:33px;height:4.5px;background:#5cb9e8;border-radius:2.25px;"></div>
<div class="a" style="left:1030.5px;top:620.5px;width:14px;height:14px;background:#fcfcfc;border:1px solid #b9bbbd;border-radius:50%;"></div>
<div class="a" style="left:1084px;top:122px;width:1px;height:521px;background:#f7f7f8;"></div>
<div class="a" style="left:162px;top:642px;width:924px;height:1px;background:#f7f7f8;"></div>
</body></html>
